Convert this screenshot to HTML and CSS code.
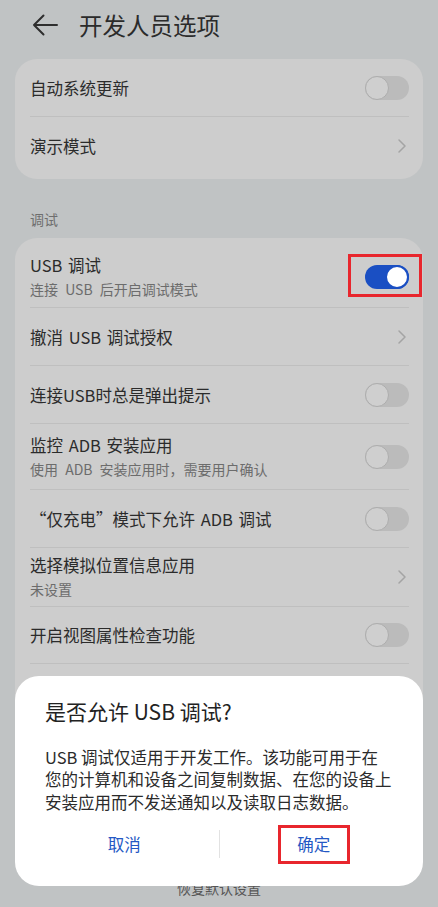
FILE: index.html
```html
<!DOCTYPE html>
<html lang="zh-CN">
<head>
<meta charset="utf-8">
<title>开发人员选项</title>
<link rel="stylesheet" href="styles.css">
</head>
<body>
<div class="page">
  <header class="header">
    <svg class="back" viewBox="0 0 26 22" width="26" height="22"><path d="M2 11 H25 M11.5 1.5 L2 11 L11.5 20.5" fill="none" stroke="#2e2e2e" stroke-width="2" stroke-linecap="round" stroke-linejoin="round"/></svg>
    <span class="title">开发人员选项</span>
  </header>

  <section class="card card-first">
    <div class="row h58">
      <span class="label">自动系统更新</span>
      <span class="toggle"><span class="knob"></span></span>
    </div>
    <div class="row h58 last">
      <span class="label">演示模式</span>
      <svg class="chev" viewBox="0 0 10 16" width="10" height="16"><path d="M2 2 L8 8 L2 14" fill="none" stroke="#a4a4a4" stroke-width="1.5" stroke-linecap="round" stroke-linejoin="round"/></svg>
    </div>
  </section>

  <div class="section">调试</div>

  <section class="card card-debug">
    <div class="row h62">
      <div class="text">
        <span class="label">USB 调试</span>
        <span class="sub">连接 USB 后开启调试模式</span>
      </div>
      <span class="toggle on marked"><span class="knob"></span></span>
    </div>
    <div class="row h58">
      <span class="label">撤消 USB 调试授权</span>
      <svg class="chev" viewBox="0 0 10 16" width="10" height="16"><path d="M2 2 L8 8 L2 14" fill="none" stroke="#a4a4a4" stroke-width="1.5" stroke-linecap="round" stroke-linejoin="round"/></svg>
    </div>
    <div class="row h58">
      <span class="label">连接USB时总是弹出提示</span>
      <span class="toggle"><span class="knob"></span></span>
    </div>
    <div class="row h66">
      <div class="text">
        <span class="label">监控 ADB 安装应用</span>
        <span class="sub">使用 ADB 安装应用时，需要用户确认</span>
      </div>
      <span class="toggle"><span class="knob"></span></span>
    </div>
    <div class="row h58">
      <span class="label">“仅充电”模式下允许 ADB 调试</span>
      <span class="toggle"><span class="knob"></span></span>
    </div>
    <div class="row h59">
      <div class="text">
        <span class="label">选择模拟位置信息应用</span>
        <span class="sub">未设置</span>
      </div>
      <svg class="chev" viewBox="0 0 10 16" width="10" height="16"><path d="M2 2 L8 8 L2 14" fill="none" stroke="#a4a4a4" stroke-width="1.5" stroke-linecap="round" stroke-linejoin="round"/></svg>
    </div>
    <div class="row h57">
      <span class="label">开启视图属性检查功能</span>
      <span class="toggle"><span class="knob"></span></span>
    </div>
    <div class="spacer"></div>
  </section>

  <div class="reset">恢复默认设置</div>

  <div class="dialog">
    <div class="dlg-title">是否允许 USB 调试?</div>
    <div class="dlg-body">USB 调试仅适用于开发工作。该功能可用于在<br>您的计算机和设备之间复制数据、在您的设备上<br>安装应用而不发送通知以及读取日志数据。</div>
    <div class="dlg-actions">
      <div class="btn"><span class="btn-text">取消</span></div>
      <div class="vdiv"></div>
      <div class="btn"><span class="btn-text boxed">确定</span></div>
    </div>
  </div>
</div>
</body>
</html>
```

FILE: styles.css
```css
* { box-sizing: border-box; }
html, body {
  margin: 0;
  padding: 0;
}
body {
  background: #c0c3c4;
  font-family: "Noto Sans CJK SC", "Noto Sans", sans-serif;
  color: #2b2b2b;
}
.page {
  position: relative;
  width: 438px;
  height: 907px;
  overflow: hidden;
}
.header {
  height: 50px;
  display: flex;
  align-items: center;
  padding-left: 32px;
}
.back { display: block; }
.title {
  margin-left: 21px;
  font-size: 23.5px;
  line-height: 30px;
  color: #2b2b2b;
}
.card {
  margin: 9px 15px 0;
  background: #cdcdcd;
  border-radius: 22px;
  padding: 0 14px 0 15px;
}
.card-first { padding-bottom: 4px; }
.card-debug { margin-top: 0; padding-top: 8px; }
.row {
  display: flex;
  align-items: center;
  justify-content: space-between;
  border-bottom: 1px solid #bfbfbf;
}
.row.last { border-bottom: none; }
.h57 { height: 57px; }
.h58 { height: 58px; }
.h59 { height: 59px; }
.h62 { height: 62px; }
.h66 { height: 66px; }
.text {
  display: flex;
  flex-direction: column;
}
.label {
  font-size: 16.5px;
  line-height: 24px;
  color: #2b2b2b;
  white-space: nowrap;
  word-spacing: 2px;
}
.sub {
  font-size: 14px;
  line-height: 24px;
  color: #6c6c6c;
  white-space: nowrap;
  word-spacing: 4px;
}
.section {
  margin: 30px 0 9px 30px;
  font-size: 14px;
  line-height: 20px;
  color: #6e6e6e;
}
.toggle {
  position: relative;
  width: 44px;
  height: 24px;
  border-radius: 12px;
  background: #bbbbbb;
  flex: none;
}
.toggle .knob {
  position: absolute;
  left: 0;
  top: 0;
  width: 24px;
  height: 24px;
  border-radius: 50%;
  background: #cfcfcf;
  border: 1.5px solid #adadad;
}
.toggle.on { background: #1a4fc3; }
.toggle.on .knob {
  left: auto;
  right: 0;
  background: #ffffff;
  border: 2px solid #1a4fc3;
}
.toggle.marked::after {
  content: "";
  position: absolute;
  top: -11px;
  bottom: -8px;
  left: -17px;
  right: -13px;
  border: 3px solid #e8262d;
}
.chev {
  display: block;
  margin-right: 2px;
  flex: none;
}
.spacer { height: 206px; }
.reset {
  margin-top: 8px;
  text-align: center;
  font-size: 14px;
  line-height: 20px;
  color: #555555;
}
.dialog {
  position: absolute;
  left: 15px;
  top: 676px;
  width: 408px;
  height: 210px;
  background: #ffffff;
  border-radius: 24px;
  padding: 0 30px;
}
.dlg-title {
  margin-top: 21px;
  font-size: 21px;
  line-height: 28px;
  color: #222222;
}
.dlg-body {
  margin-top: 20.5px;
  font-size: 16.5px;
  line-height: 22.5px;
  color: #2b2b2b;
  white-space: nowrap;
}
.dlg-actions {
  margin: 12px -15px 0;
  height: 38px;
  display: flex;
  align-items: center;
}
.btn {
  flex: 1;
  display: flex;
  justify-content: center;
  align-items: center;
}
.btn-text {
  font-size: 16.5px;
  line-height: 24px;
  color: #2458c4;
}
.btn-text.boxed {
  width: 72px;
  height: 39px;
  line-height: 33px;
  text-align: center;
  border: 3px solid #e8262d;
}
.vdiv {
  width: 1px;
  height: 28px;
  background: #e2e2e2;
}
```
